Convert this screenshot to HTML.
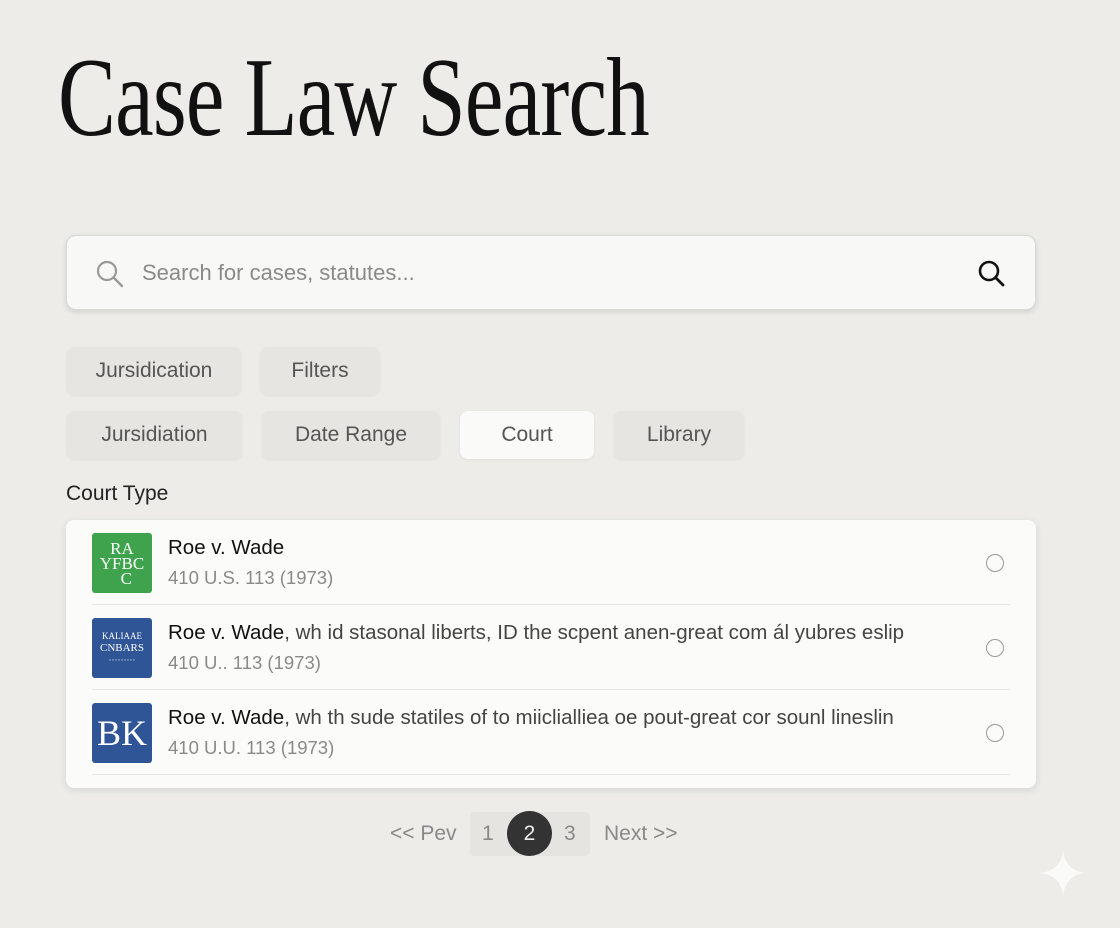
<!DOCTYPE html>
<html><head><meta charset="utf-8"><style>
*{box-sizing:border-box;margin:0;padding:0}
body{width:1120px;height:928px;overflow:hidden;background:#edece8;font-family:"Liberation Sans",sans-serif;position:relative}
.title{position:absolute;left:58px;top:34px;font-family:"Liberation Serif",serif;font-size:112px;color:#111;transform-origin:0 0;transform:scaleX(0.775);white-space:nowrap;letter-spacing:-1px}
.search{position:absolute;left:66px;top:235px;width:970px;height:75px;background:#f8f8f7;border:1px solid #d8d8d4;border-radius:10px;box-shadow:0 2px 6px rgba(0,0,0,.12)}
.search .ph{position:absolute;left:75px;top:24px;font-size:22px;color:#8a8a88}
.chip{position:absolute;height:48px;border-radius:8px;background:#e6e5e1;font-size:21px;color:#555;display:flex;align-items:center;justify-content:center;box-shadow:0 1px 3px rgba(0,0,0,.06)}
.label{position:absolute;left:66px;top:482px;font-size:21px;color:#222}
.list{position:absolute;left:66px;top:520px;width:970px;height:268px;background:#fbfbfa;border-radius:8px;box-shadow:0 2px 8px rgba(0,0,0,.1)}
.row{position:absolute;left:26px;width:918px;height:85px;border-bottom:1px solid #e6e6e3}
.logo{position:absolute;left:0;top:13px;width:60px;height:60px;border-radius:3px;color:#fff;font-family:"Liberation Serif",serif;display:flex;align-items:center;justify-content:center;text-align:center;overflow:hidden}
.t{position:absolute;left:76px;top:16px;font-size:20.5px;color:#444;white-space:nowrap}
.t b{font-weight:normal;color:#111}
.s{position:absolute;left:76px;top:47px;font-size:18.5px;color:#8a8a88}
.radio{position:absolute;right:6px;top:34px;width:18px;height:18px;border:1.5px solid #999;border-radius:50%}
.pg{position:absolute;top:822px;font-size:21px;color:#888}
</style></head><body>
<div class="title">Case Law Search</div>
<div class="search">
<svg style="position:absolute;left:28px;top:23px" width="30" height="30" viewBox="0 0 30 30"><circle cx="12" cy="12" r="9" fill="none" stroke="#999" stroke-width="2.2"/><line x1="18.5" y1="18.5" x2="27" y2="27" stroke="#999" stroke-width="2.4" stroke-linecap="round"/></svg>
<div class="ph">Search for cases, statutes...</div>
<svg style="position:absolute;left:910px;top:23px" width="30" height="30" viewBox="0 0 30 30"><circle cx="12" cy="12" r="9" fill="none" stroke="#111" stroke-width="2.6"/><line x1="18.5" y1="18.5" x2="26" y2="26" stroke="#111" stroke-width="2.8" stroke-linecap="round"/></svg>
</div>
<div class="chip" style="left:67px;top:347px;width:174px">Jursidication</div>
<div class="chip" style="left:260px;top:347px;width:120px">Filters</div>
<div class="chip" style="left:67px;top:411px;width:175px">Jursidiation</div>
<div class="chip" style="left:262px;top:411px;width:178px">Date Range</div>
<div class="chip" style="left:460px;top:411px;width:134px;background:#fafaf9">Court</div>
<div class="chip" style="left:614px;top:411px;width:130px">Library</div>
<div class="label">Court Type</div>
<div class="list">
<div class="row" style="top:0">
<div class="logo" style="background:#3fa34d;font-size:17px;line-height:15px"><div>RA<br>YFBC<br>&nbsp;&nbsp;C</div></div>
<div class="t"><b>Roe v. Wade</b></div><div class="s">410 U.S. 113 (1973)</div><div class="radio"></div></div>
<div class="row" style="top:85px">
<div class="logo" style="background:#2f5597;font-size:9px;line-height:12px"><div>KALIAAE<br><span style="font-size:11px">CNBARS</span><br>·········</div></div>
<div class="t"><b>Roe v. Wade</b>, wh id stasonal liberts, ID the scpent anen-great com ál yubres eslip</div><div class="s">410 U.. 113 (1973)</div><div class="radio"></div></div>
<div class="row" style="top:170px">
<div class="logo" style="background:#2f5597;font-size:36px">BK</div>
<div class="t"><b>Roe v. Wade</b>, wh th sude statiles of to miiclialliea oe pout-great cor sounl lineslin</div><div class="s">410 U.U. 113 (1973)</div><div class="radio"></div></div>
</div>
<div class="pg" style="left:390px">&lt;&lt; Pev</div>
<div style="position:absolute;left:470px;top:812px;width:120px;height:44px;background:#e5e4e0;border-radius:4px"></div>
<div class="pg" style="left:482px">1</div>
<div style="position:absolute;left:507px;top:811px;width:45px;height:45px;border-radius:50%;background:#333;color:#eee;font-size:21px;display:flex;align-items:center;justify-content:center">2</div>
<div class="pg" style="left:564px">3</div>
<div class="pg" style="left:604px">Next &gt;&gt;</div>
<svg style="position:absolute;left:1038px;top:848px" width="50" height="50" viewBox="0 0 50 50"><path d="M25 2 Q27 23 48 25 Q27 27 25 48 Q23 27 2 25 Q23 23 25 2Z" fill="#fafaf8"/></svg>
</body></html>
